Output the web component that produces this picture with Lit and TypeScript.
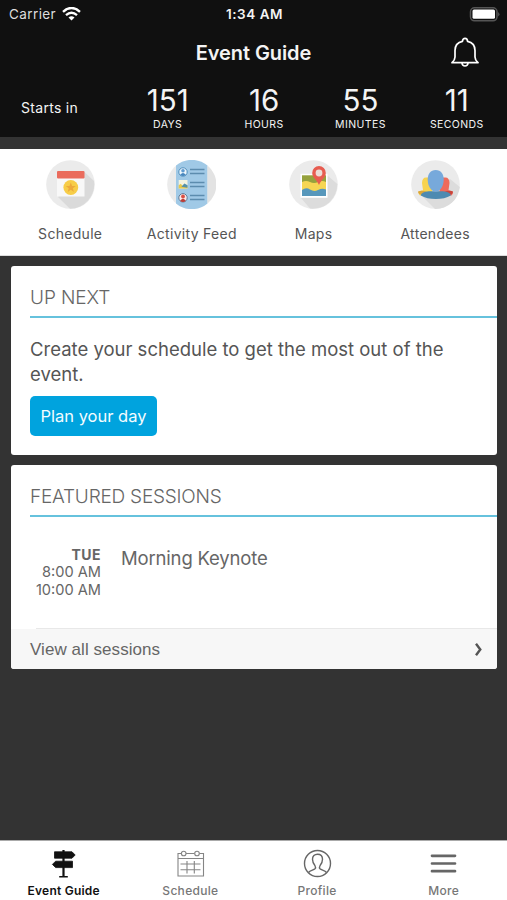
import { LitElement, html, css, svg } from "lit";
import { customElement } from "lit/decorators.js";

const shortcutIcons = {
  schedule: svg`
    <path d="M38.5 12 L48 21 A24.5 24.5 0 0 1 24 48.8 L12 37Z" fill="#dadada"/>
    <rect x="11" y="18" width="27.5" height="18.5" fill="#f8f8f8"/>
    <rect x="11" y="11" width="27.5" height="7.6" rx="1" fill="#ea6b5c"/>
    <circle cx="24.8" cy="27.5" r="7.4" fill="#f7cd48"/>
    <path d="M24.8 22.5l1.3 3.4 3.7.1-2.9 2.3 1 3.6-3.1-2.1-3.1 2.1 1-3.6-2.9-2.3 3.7-.1z" fill="#eda93b"/>`,
  feed: svg`
    <path d="M9 5.6 A24.5 24.5 0 0 1 40.5 5.6 V43.4 A24.5 24.5 0 0 1 9 43.4Z" fill="#a0c9e6"/>
    <path d="M40.5 5.6 A24.5 24.5 0 0 1 40.5 43.4Z" fill="#e3e3e3"/>
    <circle cx="16" cy="12" r="4.2" fill="#edf6fc" stroke="#4d8dbd" stroke-width="1"/>
    <circle cx="16" cy="10.8" r="1.8" fill="#5f9bd0"/><path d="M13.2 15q2.8-3.8 5.6 0-2.8 2-5.6 0z" fill="#4786bd"/>
    <rect x="11.7" y="20" width="8.8" height="8.6" fill="#f4f3df"/>
    <path d="M11.7 28.6v-3.4l2-1.5 3 3 3.8-1v2.9z" fill="#e7c84b"/><path d="M14.4 26.8l3-3.4 3.1 1.8v2.6z" fill="#5491aa"/>
    <circle cx="16" cy="37.8" r="4.2" fill="#fae9e8" stroke="#5d7994" stroke-width="1"/>
    <circle cx="16" cy="36.5" r="1.9" fill="#d94f43"/><path d="M13.2 41q2.8-4.6 5.6 0-2.8 2-5.6 0z" fill="#bd3d37"/>
    <path d="M23 9.5h14.5M23 13.5h14.5M23 22.5h14.5M23 26.5h14.5M23 35.5h14.5M23 39.5h14.5" stroke="#5c8cae" stroke-width="1.3"/>`,
  maps: svg`
    <path d="M39 16 L48.3 24 A24.5 24.5 0 0 1 21 48.5 L12 38Z" fill="#dcdcdc"/>
    <rect x="11.5" y="13.8" width="27" height="24" fill="#fff"/>
    <rect x="13" y="15.3" width="24" height="20.7" fill="#96a23d"/>
    <path d="M13 22q4-2 8 0t8 0 8 0v14H13z" fill="#f6d653"/>
    <path d="M13 30q4-3 8-.5t8 .5 8-.5V36H13z" fill="#5797bb"/>
    <path d="M30 25c-1.5-4.5-6.8-7.5-6.8-12.1a6.8 6.8 0 0 1 13.6 0C36.8 17.5 31.5 20.5 30 25z" fill="#e75c50"/>
    <circle cx="30" cy="13" r="3.4" fill="#ecdcd6"/>`,
  attendees: svg`
    <path d="M39 19 L48.8 27 A24.5 24.5 0 0 1 24 49 L11 36Z" fill="#dcdcdc"/>
    <path d="M11 23q.2-5.5 4-5.5h6v18H9q-3-3.5 0-4.5l3-.8z" fill="#f7d34f"/>
    <path d="M7 31.5q4-1.5 9 .5l-3 3q-6 0-6-3.5z" fill="#dca738"/>
    <path d="M38.5 23q-.2-5.5-4-5.5h-6v18h12q3-3.5 0-4.5l-3-.8z" fill="#ee6a5b"/>
    <path d="M42 31.5q-4-1.500-9 .5l3 3q6 0 6-3.5z" fill="#c9463d"/>
    <path d="M9.8 35.5q0-3.4 8-4.3h14q8 .9 8 4.3-6 3.6-15 3.6t-15-3.6z" fill="#4d8ab1"/>
    <path d="M24.7 10c5.2 0 8 4 8 9.5 0 6.5-3.5 12.3-8 12.3s-8-5.8-8-12.3c0-5.5 2.8-9.5 8-9.5z" fill="#77a9db"/>`,
};

const tabIcons = {
  guide: svg`
    <path d="M13.4 1h2.2v26h3.2v1.5h-8.600v-1.500h3.200z" fill="#111"/>
    <path d="M5.5 2.8H23l3.2 3.2L23 9.2H5.5z" fill="#111" stroke="#111" stroke-width=".8" stroke-linejoin="round"/>
    <path d="M23.5 12.2H6.6l-3.2 3.2 3.2 3.2h16.9z" fill="#111" stroke="#111" stroke-width=".8" stroke-linejoin="round"/>`,
  calendar: svg`
    <g fill="none" stroke="#858585" stroke-width="1.1">
      <path d="M5.3 4.5H2V27h25.5V4.5h-4M10 4.5h8.5M2 9.5h25.5M4.5 15h20M4.5 20.8h20M11 12v12.5M18.300 12v12.5"/>
      <circle cx="7.7" cy="4.5" r="2.3"/><circle cx="21" cy="4.5" r="2.3"/>
    </g>`,
  profile: svg`
    <g fill="none" stroke="#666" stroke-width="1.4" stroke-linejoin="round">
      <circle cx="14.5" cy="14.5" r="13"/>
      <path d="M5.5 23.5c1.5-2.2 5-2.3 6.5-3.7.8-.9.5-2.3-.1-3.3-1.5-1.8-2.4-3.8-2.4-6.2 0-3.2 2-5.1 5-5.1s5 1.9 5 5.1c0 2.4-.9 4.4-2.4 6.2-.6 1-.9 2.400-.1 3.300 1.500 1.400 5 1.500 6.500 3.700"/>
    </g>`,
  more: svg`<path d="M3 6.800h23M3 14.500h23M3 22.200h23" stroke="#666" stroke-width="2.7" stroke-linecap="round"/>`,
};

@customElement("app-root")
export class AppRoot extends LitElement {
  static styles = css`
    :host {
      display: flex; flex-direction: column; height: 900px; width: 507px; overflow: hidden;
      background: #333; font-family: Inter, "Liberation Sans", sans-serif; color: #555;
    }
    * { box-sizing: border-box; }
    svg { display: block; flex: none; }
    .header { height: 136.5px; background: #101010; color: #f4f4f4; flex: none; }
    .status { height: 28px; display: grid; grid-template-columns: 1fr auto 1fr; align-items: center; padding: 0 7px 0 9px; }
    .carrier { display: flex; align-items: center; gap: 5.5px; font-size: 13.5px; letter-spacing: .4px; color: #ddd; }
    .clock { font-size: 13.5px; font-weight: 600; letter-spacing: .55px; }
    .battery { justify-self: end; }
    .titlebar { height: 50px; display: grid; grid-template-columns: 1fr auto 1fr; align-items: center; padding: 0 28px 1px 28px; }
    .title { grid-column: 2; font-size: 20px; font-weight: 600; letter-spacing: -.1px; }
    .bell { justify-self: end; }
    .countdown { display: flex; padding: 5px 2px 0 21px; }
    .starts { width: 98.5px; padding-top: 16px; font-size: 14px; line-height: 18px; letter-spacing: .3px; }
    .unit { flex: 1; text-align: center; }
    .number { font-size: 29.5px; line-height: 34px; font-weight: 400; letter-spacing: 0; }
    .unit-label { font-size: 10.5px; line-height: 15px; letter-spacing: .4px; }
    .shortcuts { flex: none; margin-top: 12.5px; height: 107px; background: #fff; display: flex; padding: 11px 11px 0 9.4px; border-bottom: 1px solid #ddd; }
    .shortcut { flex: 1; display: flex; flex-direction: column; align-items: center; gap: 16px; font-size: 14px; line-height: 18px; letter-spacing: .3px; }
    .card { flex: none; margin: 10px 10px 0 11px; background: #fff; border-radius: 3px; overflow: hidden; }
    .card-next { height: 189px; }
    .card-featured { height: 204px; display: flex; flex-direction: column; }
    .heading { height: 52px; margin-left: 19px; padding-top: 20px; border-bottom: 2px solid #66c2dd; font-size: 19px; line-height: 24px; font-weight: 300; letter-spacing: -.22px; color: #666; flex: none; }
    .heading-next { letter-spacing: -.1px; }
    .message { margin: 19px 19px 9px; font-size: 18.5px; line-height: 25px; }
    .plan { margin-left: 19px; width: 127px; height: 40px; border: 0; border-radius: 5px; padding: 0; background: #00a3de; color: #f4fcff; font: 400 16.5px Inter, sans-serif; display: block; }
    .session { flex: 1; display: flex; padding-top: 29px; color: #666; }
    .times { width: 90px; text-align: right; font-size: 14.6px; line-height: 17.6px; }
    .day { font-size: 14px; font-weight: 700; letter-spacing: .5px; margin-bottom: .8px; }
    .session-name { margin-left: 20px; font-size: 18.5px; line-height: 24px; letter-spacing: -.17px; }
    .rule { margin-left: 25px; height: 1px; background: #e8e8e8; }
    .all { height: 40px; background: #f7f7f7; display: flex; align-items: center; justify-content: space-between; padding: 1px 14px 0 19px; font: 17px "Liberation Sans", sans-serif; letter-spacing: .06px; color: #666; }
    .tabs { margin-top: auto; flex: none; height: 60px; background: #fff; display: flex; border-top: 1px solid #aaa; padding-left: .4px; }
    .tab { flex: 1; display: flex; flex-direction: column; align-items: center; padding-top: 8px; gap: 5px; font-size: 12px; font-weight: 500; line-height: 16px; letter-spacing: .3px; color: #777; }
    .active { color: #111; font-weight: 600; letter-spacing: .22px; }
  `;

  private units = [["151", "DAYS"], ["16", "HOURS"], ["55", "MINUTES"], ["11", "SECONDS"]];
  private shortcuts = [
    ["Schedule", shortcutIcons.schedule], ["Activity Feed", shortcutIcons.feed],
    ["Maps", shortcutIcons.maps], ["Attendees", shortcutIcons.attendees],
  ] as const;
  private tabs = [
    ["Event Guide", tabIcons.guide], ["Schedule", tabIcons.calendar],
    ["Profile", tabIcons.profile], ["More", tabIcons.more],
  ] as const;

  render() {
    return html`
      <header class="header">
        <div class="status">
          <div class="carrier"><span>Carrier</span>
            <svg width="19" height="15" viewBox="0 0 19 15" fill="none" stroke="#fff" stroke-width="2.4">
              <path d="M1 4.8q8.5-7.6 17 0M4 8.1q5.5-4.8 11 0"/><path d="M6.5 10.5q3-2.4 6 0l-3 3z" fill="#fff" stroke="none"/>
            </svg>
          </div>
          <div class="clock">1:34 AM</div>
          <svg class="battery" width="31" height="15" viewBox="0 0 31 15">
            <rect x="1.5" y=".8" width="26.500" height="13" rx="4" fill="#101010" stroke="#555" stroke-width="1.5"/>
            <rect x="3.500" y="2.6" width="22.500" height="9.2" rx="1.5" fill="#fff"/>
            <path d="M29.300 5q2.200 2.300 0 4.600z" fill="#666"/>
          </svg>
        </div>
        <div class="titlebar">
          <div class="title">Event Guide</div>
          <svg class="bell" width="28" height="31" viewBox="0 0 28 31" fill="none" stroke="#fff" stroke-width="1.7" stroke-linejoin="round">
            <path d="M11.5 4.3C11.5.3 16.5.3 16.5 4.3C22 5.4 24 9.2 24 13.5V20q0 3 3 5.7H1Q4 23 4 20v-6.5C4 9.2 6 5.4 11.500 4.300z"/>
            <path d="M11 26q.3 3 3 3t3-3"/>
          </svg>
        </div>
        <div class="countdown">
          <div class="starts">Starts in</div>
          ${this.units.map(([n, l]) => html`<div class="unit"><div class="number">${n}</div><div class="unit-label">${l}</div></div>`)}
        </div>
      </header>
      <nav class="shortcuts">
        ${this.shortcuts.map(([label, icon]) => html`
          <div class="shortcut">
            <svg width="49" height="49" viewBox="0 0 49 49"><circle cx="24.5" cy="24.5" r="24.3" fill="#ebebeb"/>${icon}</svg>
            <span>${label}</span>
          </div>`)}
      </nav>
      <section class="card card-next">
        <div class="heading heading-next">UP NEXT</div>
        <div class="message">Create your schedule to get the most out of the event.</div>
        <button class="plan">Plan your day</button>
      </section>
      <section class="card card-featured">
        <div class="heading">FEATURED SESSIONS</div>
        <div class="session">
          <div class="times"><div class="day">TUE</div><div>8:00 AM</div><div>10:00 AM</div></div>
          <div class="session-name">Morning Keynote</div>
        </div>
        <div class="rule"></div>
        <div class="all"><span>View all sessions</span>
          <svg width="9" height="14" viewBox="0 0 9 14" fill="none" stroke="#555" stroke-width="2.4"><path d="M2 .8l4.300 5.700L2 12.200"/></svg>
        </div>
      </section>
      <nav class="tabs">
        ${this.tabs.map(([label, icon], i) => html`
          <div class="tab ${i === 0 ? "active" : ""}">
            <svg width="29" height="29" viewBox="0 0 29 29">${icon}</svg><span>${label}</span>
          </div>`)}
      </nav>`;
  }
}
